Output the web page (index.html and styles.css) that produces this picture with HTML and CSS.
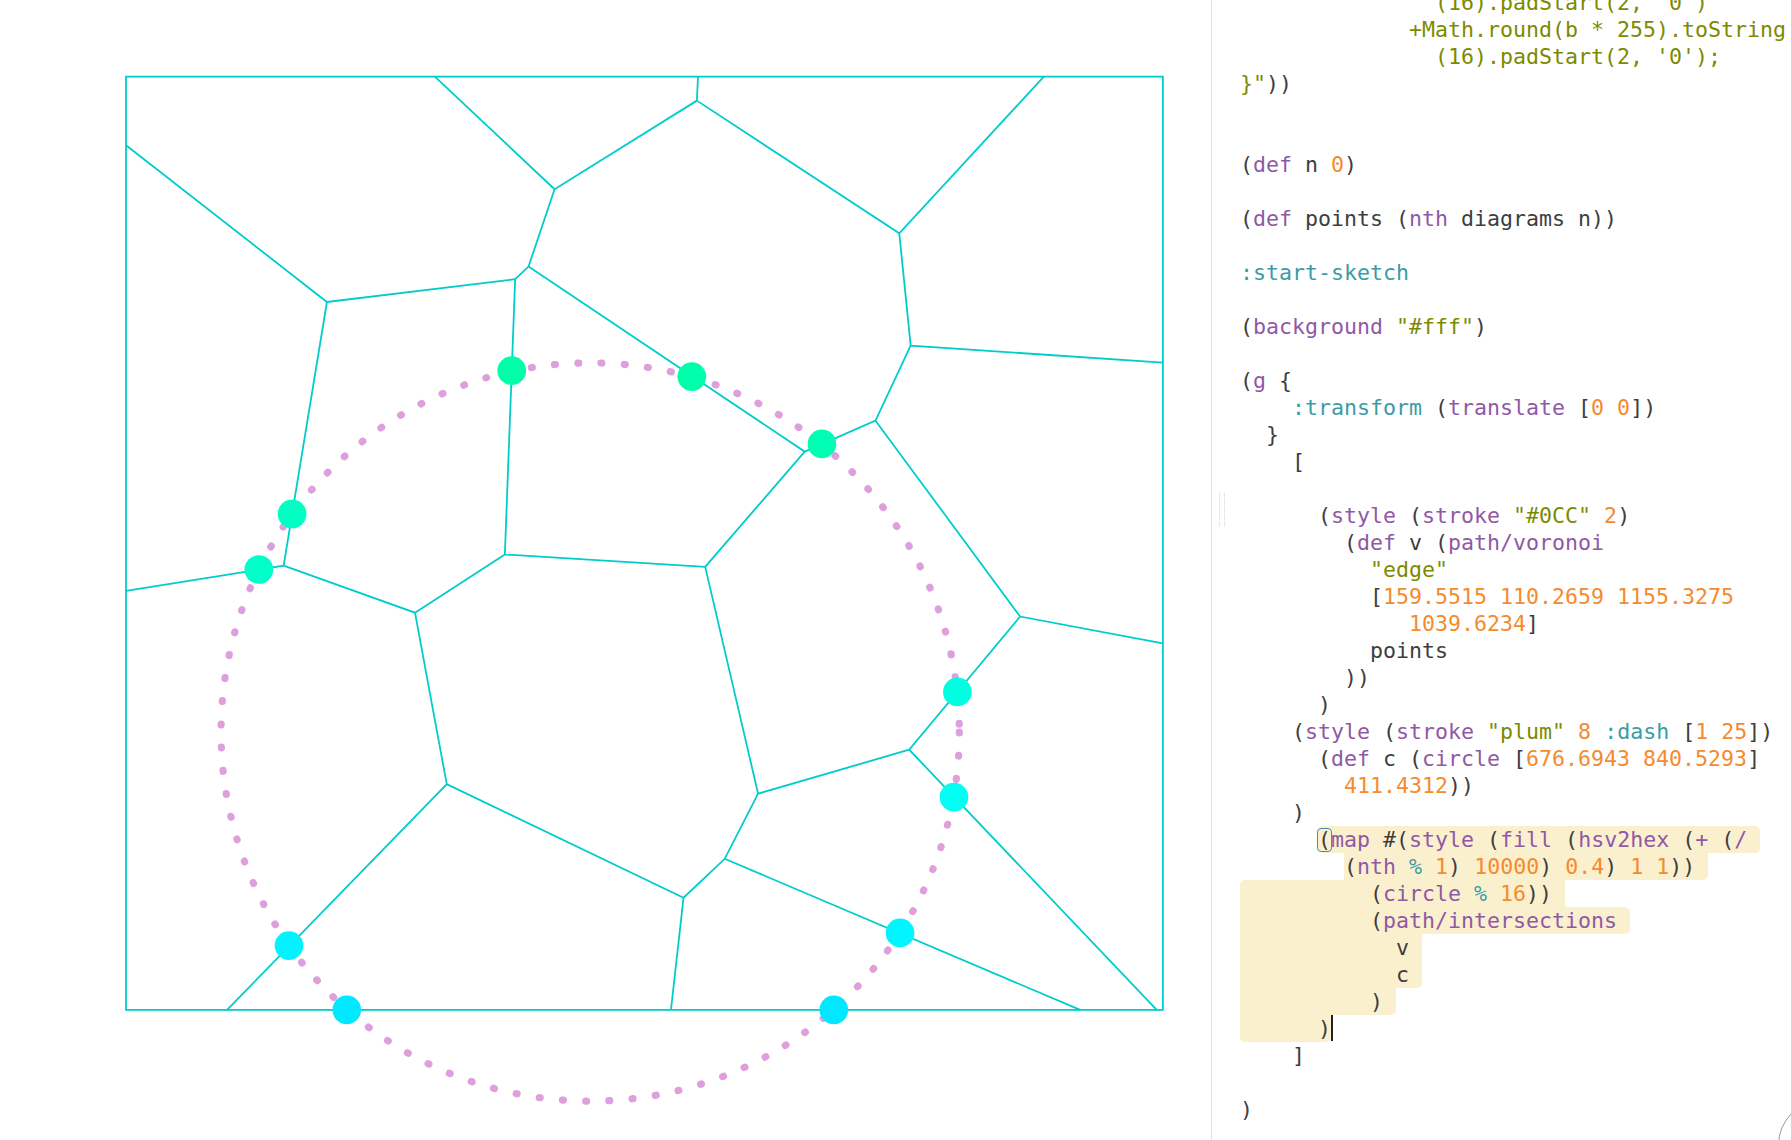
FILE: index.html
```html
<!DOCTYPE html>
<html lang="en">
<head>
<meta charset="utf-8">
<title>Voronoi sketch</title>
<link rel="stylesheet" href="styles.css">
</head>
<body>
<div class="app">
  <div class="viewport">
    <svg class="canvas" width="1211" height="1140" viewBox="0 0 1060.2 998.1" xmlns="http://www.w3.org/2000/svg">
      <g fill="none" stroke="#00cccc" stroke-width="1.57" stroke-linejoin="miter">
        <rect x="110.3" y="67.1" width="907.8" height="817.1"/>
        <path d="M380.7 67.1 L485.5 165.7
          M110.3 127.2 L286.2 264.4 L451.0 244.5 L462.7 233.4 L485.5 165.7 L610.1 88.1 L611.1 67.1
          M610.1 88.1 L787.3 204.3 L913.9 67.1
          M787.3 204.3 L797.3 302.6 L1018.1 317.5
          M797.3 302.6 L766.5 368.3 L704.5 395.4 L462.7 233.4
          M766.5 368.3 L893.1 539.8 L1018.1 563.2
          M893.1 539.8 L796.0 656.4 L1012.7 884.2
          M796.0 656.4 L663.7 694.9 L617.4 496.3 L704.5 395.4
          M617.4 496.3 L442.0 485.5 L451.0 244.5
          M286.2 264.4 L248.3 495.2 L110.3 517.4
          M248.3 495.2 L363.3 536.4 L442.0 485.5
          M363.3 536.4 L391.1 686.5 L198.8 884.2
          M391.1 686.5 L598.4 786.0 L587.4 884.2
          M598.4 786.0 L634.5 751.9 L663.7 694.9
          M634.5 751.9 L945.7 884.2"/>
      </g>
      <circle cx="516.7" cy="640.9" r="323.2" fill="none" stroke="#dda0dd" stroke-width="6.28" stroke-linecap="round" stroke-dasharray="0.786 19.64"/>
      <g>
        <circle cx="448.0" cy="324.5" r="12.57" fill="#00ffa9"/>
        <circle cx="605.7" cy="329.7" r="12.57" fill="#00ffaa"/>
        <circle cx="719.6" cy="388.7" r="12.57" fill="#00ffb5"/>
        <circle cx="255.7" cy="450.0" r="12.57" fill="#00ffc2"/>
        <circle cx="226.6" cy="498.6" r="12.57" fill="#00ffcb"/>
        <circle cx="838.2" cy="605.8" r="12.57" fill="#00ffe0"/>
        <circle cx="835.2" cy="697.9" r="12.57" fill="#00fff2"/>
        <circle cx="788.0" cy="816.8" r="12.57" fill="#00f5ff"/>
        <circle cx="730.0" cy="884.2" r="12.57" fill="#00e8ff"/>
        <circle cx="303.6" cy="884.2" r="12.57" fill="#00e8ff"/>
        <circle cx="253.0" cy="827.9" r="12.57" fill="#00f3ff"/>
      </g>
    </svg>
  </div>
  <div class="editor">
    <div class="grip"></div>
    <div class="code">
<div class="ln">               <span class="s">(16).padStart(2, '0')</span></div>
<div class="ln">             <span class="s">+Math.round(b * 255).toString</span></div>
<div class="ln">               <span class="s">(16).padStart(2, '0');</span></div>
<div class="ln"><span class="s">}"</span>))</div>
<div class="ln"></div>
<div class="ln"></div>
<div class="ln">(<span class="p">def</span> n <span class="n">0</span>)</div>
<div class="ln"></div>
<div class="ln">(<span class="p">def</span> points (<span class="p">nth</span> diagrams n))</div>
<div class="ln"></div>
<div class="ln"><span class="k">:start-sketch</span></div>
<div class="ln"></div>
<div class="ln">(<span class="p">background</span> <span class="s">"#fff"</span>)</div>
<div class="ln"></div>
<div class="ln">(<span class="p">g</span> {</div>
<div class="ln">    <span class="k">:transform</span> (<span class="p">translate</span> [<span class="n">0</span> <span class="n">0</span>])</div>
<div class="ln">  }</div>
<div class="ln">    [</div>
<div class="ln"></div>
<div class="ln">      (<span class="p">style</span> (<span class="p">stroke</span> <span class="s">"#0CC"</span> <span class="n">2</span>)</div>
<div class="ln">        (<span class="p">def</span> v (<span class="p">path/voronoi</span></div>
<div class="ln">          <span class="s">"edge"</span></div>
<div class="ln">          [<span class="n">159.5515</span> <span class="n">110.2659</span> <span class="n">1155.3275</span></div>
<div class="ln">             <span class="n">1039.6234</span>]</div>
<div class="ln">          points</div>
<div class="ln">        ))</div>
<div class="ln">      )</div>
<div class="ln">    (<span class="p">style</span> (<span class="p">stroke</span> <span class="s">"plum"</span> <span class="n">8</span> <span class="k">:dash</span> [<span class="n">1</span> <span class="n">25</span>])</div>
<div class="ln">      (<span class="p">def</span> c (<span class="p">circle</span> [<span class="n">676.6943</span> <span class="n">840.5293</span>]</div>
<div class="ln">        <span class="n">411.4312</span>))</div>
<div class="ln">    )</div>
<div class="ln">      <span class="hl r1"><span class="mb">(</span><span class="p">map</span> #(<span class="p">style</span> (<span class="p">fill</span> (<span class="p">hsv2hex</span> (<span class="p">+</span> (<span class="p">/</span> </span></div>
<div class="ln">        <span class="hl r2">(<span class="p">nth</span> <span class="k">%</span> <span class="n">1</span>) <span class="n">10000</span>) <span class="n">0.4</span>) <span class="n">1</span> <span class="n">1</span>)) </span></div>
<div class="ln"><span class="hl r3">          (<span class="p">circle</span> <span class="k">%</span> <span class="n">16</span>)) </span></div>
<div class="ln"><span class="hl r4">          (<span class="p">path/intersections</span> </span></div>
<div class="ln"><span class="hl r5">            v </span></div>
<div class="ln"><span class="hl r6">            c </span></div>
<div class="ln"><span class="hl r7">          ) </span></div>
<div class="ln"><span class="hl r8">      )</span><span class="cursor"></span></div>
<div class="ln">    ]</div>
<div class="ln"></div>
<div class="ln">)</div>
    </div>
    <div class="fab"></div>
  </div>
</div>
</body>
</html>
```
FILE: styles.css
```css
html, body {
  margin: 0;
  padding: 0;
  background: #ffffff;
}

body {
  width: 1791px;
  height: 1140px;
  overflow: hidden;
}

.app {
  display: flex;
  width: 1791px;
  height: 1140px;
}

.viewport {
  width: 1211px;
  height: 1140px;
  flex: none;
  background: #ffffff;
}

.canvas {
  display: block;
}

.editor {
  position: relative;
  flex: 1;
  height: 1140px;
  overflow: hidden;
  border-left: 1px solid #e2e2e2;
  background: #ffffff;
}

.code {
  margin-top: -11px;
  padding-left: 28px;
  font-family: "DejaVu Sans Mono", "Liberation Mono", monospace;
  font-size: 21.6px;
  line-height: 27px;
  color: #3e3e3e;
}

.ln {
  height: 27px;
  line-height: 27px;
  white-space: pre;
}

.p { color: #9059a6; }
.s { color: #7d8a00; }
.n { color: #f58a2e; }
.k { color: #3a9ca6; }

.hl {
  display: inline-block;
  height: 27px;
  line-height: 27px;
  vertical-align: top;
  background: #fbf0cd;
}

.r1 { border-radius: 5px; }
.r2 { border-radius: 0 0 5px 0; }
.r3 { border-radius: 5px 0 0 0; }
.r4 { border-radius: 0 5px 5px 0; }
.r5 { border-radius: 0; }
.r6 { border-radius: 0 0 5px 0; }
.r7 { border-radius: 0 0 5px 0; }
.r8 { border-radius: 0 0 5px 5px; }

.mb {
  position: relative;
}

.mb::after {
  content: "";
  position: absolute;
  left: -1px;
  right: -1px;
  top: 1px;
  bottom: 0;
  border: 1px solid #4f86c6;
  border-radius: 4px;
}

.cursor {
  display: inline-block;
  width: 2px;
  height: 26px;
  margin-right: -2px;
  vertical-align: top;
  background: #222222;
}

.grip {
  position: absolute;
  left: 7px;
  top: 493px;
  width: 4px;
  height: 33px;
  border-left: 1px dotted #d4d4d4;
  border-right: 1px dotted #d4d4d4;
}

.fab {
  position: absolute;
  left: 566px;
  top: 1100px;
  width: 90px;
  height: 90px;
  border: 1px solid #9a9a9a;
  border-radius: 50%;
  box-sizing: border-box;
}
```
